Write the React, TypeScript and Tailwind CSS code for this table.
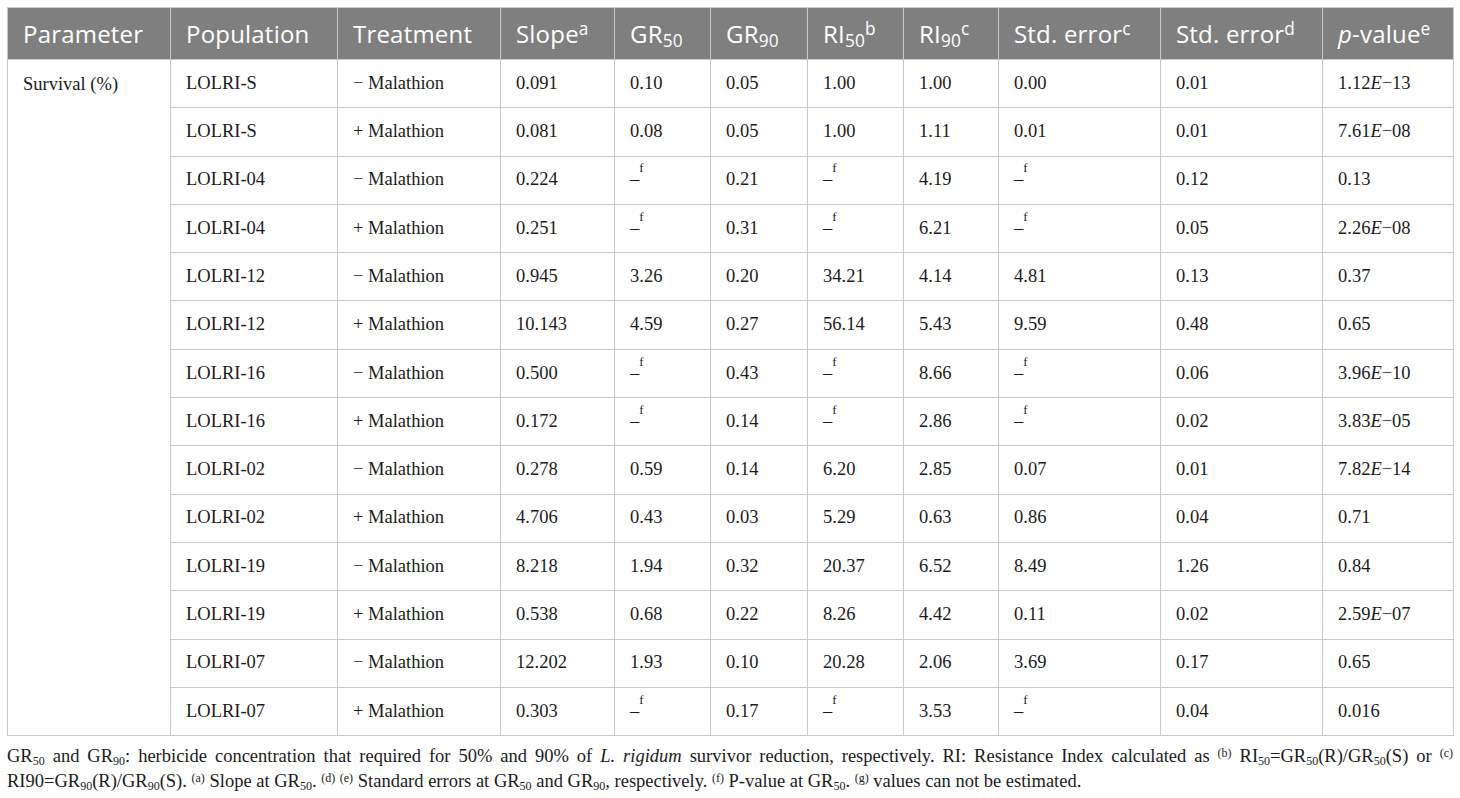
const widths = [163, 167, 163, 114, 96, 97, 96, 95, 162, 162, 131]

type Row = {
  pop: string
  treat: string
  slope: string
  gr50: string
  gr90: string
  ri50: string
  ri90: string
  sec: string
  sed: string
  p: [string, string] | string
}

const rows: Row[] = [
  { pop: "LOLRI-S", treat: "− Malathion", slope: "0.091", gr50: "0.10", gr90: "0.05", ri50: "1.00", ri90: "1.00", sec: "0.00", sed: "0.01", p: ["1.12", "−13"] },
  { pop: "LOLRI-S", treat: "+ Malathion", slope: "0.081", gr50: "0.08", gr90: "0.05", ri50: "1.00", ri90: "1.11", sec: "0.01", sed: "0.01", p: ["7.61", "−08"] },
  { pop: "LOLRI-04", treat: "− Malathion", slope: "0.224", gr50: "f", gr90: "0.21", ri50: "f", ri90: "4.19", sec: "f", sed: "0.12", p: "0.13" },
  { pop: "LOLRI-04", treat: "+ Malathion", slope: "0.251", gr50: "f", gr90: "0.31", ri50: "f", ri90: "6.21", sec: "f", sed: "0.05", p: ["2.26", "−08"] },
  { pop: "LOLRI-12", treat: "− Malathion", slope: "0.945", gr50: "3.26", gr90: "0.20", ri50: "34.21", ri90: "4.14", sec: "4.81", sed: "0.13", p: "0.37" },
  { pop: "LOLRI-12", treat: "+ Malathion", slope: "10.143", gr50: "4.59", gr90: "0.27", ri50: "56.14", ri90: "5.43", sec: "9.59", sed: "0.48", p: "0.65" },
  { pop: "LOLRI-16", treat: "− Malathion", slope: "0.500", gr50: "f", gr90: "0.43", ri50: "f", ri90: "8.66", sec: "f", sed: "0.06", p: ["3.96", "−10"] },
  { pop: "LOLRI-16", treat: "+ Malathion", slope: "0.172", gr50: "f", gr90: "0.14", ri50: "f", ri90: "2.86", sec: "f", sed: "0.02", p: ["3.83", "−05"] },
  { pop: "LOLRI-02", treat: "− Malathion", slope: "0.278", gr50: "0.59", gr90: "0.14", ri50: "6.20", ri90: "2.85", sec: "0.07", sed: "0.01", p: ["7.82", "−14"] },
  { pop: "LOLRI-02", treat: "+ Malathion", slope: "4.706", gr50: "0.43", gr90: "0.03", ri50: "5.29", ri90: "0.63", sec: "0.86", sed: "0.04", p: "0.71" },
  { pop: "LOLRI-19", treat: "− Malathion", slope: "8.218", gr50: "1.94", gr90: "0.32", ri50: "20.37", ri90: "6.52", sec: "8.49", sed: "1.26", p: "0.84" },
  { pop: "LOLRI-19", treat: "+ Malathion", slope: "0.538", gr50: "0.68", gr90: "0.22", ri50: "8.26", ri90: "4.42", sec: "0.11", sed: "0.02", p: ["2.59", "−07"] },
  { pop: "LOLRI-07", treat: "− Malathion", slope: "12.202", gr50: "1.93", gr90: "0.10", ri50: "20.28", ri90: "2.06", sec: "3.69", sed: "0.17", p: "0.65" },
  { pop: "LOLRI-07", treat: "+ Malathion", slope: "0.303", gr50: "f", gr90: "0.17", ri50: "f", ri90: "3.53", sec: "f", sed: "0.04", p: "0.016" },
]

function Val({ v }: { v: string }) {
  if (v === "f")
    return (
      <span>
        –<sup className="align-[0.5em] text-[13px] leading-none">f</sup>
      </span>
    )
  return <>{v}</>
}

function PVal({ p }: { p: Row["p"] }) {
  if (typeof p === "string") return <>{p}</>
  return (
    <>
      {p[0]}
      <i>E</i>
      {p[1]}
    </>
  )
}

const th = "border border-[#c9c9c9] px-[15px] text-left align-middle font-normal whitespace-nowrap"
const td = "h-[48.3px] border border-[#c9c9c9] px-[15px] align-middle whitespace-nowrap"
const sub = "align-[-0.25em] text-[0.72em] leading-none"
const sup = "align-[0.45em] text-[0.72em] leading-none"
const fsub = "align-[-0.25em] text-[12px] leading-none"
const fsup = "align-[0.45em] text-[12px] leading-none"

export default function App() {
  return (
    <div className="min-h-[798px] w-[1460px] bg-white px-[7px] pt-[7px] text-[#1b1b1b]">
      <table className="w-[1446px] table-fixed border-collapse">
        <colgroup>
          {widths.map((w, i) => (
            <col key={i} style={{ width: w }} />
          ))}
        </colgroup>
        <thead>
          <tr className="h-[52px] bg-[#7f7f7f] font-['Open_Sans',sans-serif] text-[24px] tracking-[0.2px] text-white">
            <th className={th}>Parameter</th>
            <th className={th}>Population</th>
            <th className={th}>Treatment</th>
            <th className={th}>
              Slope<span className={sup}>a</span>
            </th>
            <th className={th}>
              GR<span className={sub}>50</span>
            </th>
            <th className={th}>
              GR<span className={sub}>90</span>
            </th>
            <th className={th}>
              RI<span className={sub}>50</span>
              <span className={sup}>b</span>
            </th>
            <th className={th}>
              RI<span className={sub}>90</span>
              <span className={sup}>c</span>
            </th>
            <th className={th}>
              Std. error<span className={sup}>c</span>
            </th>
            <th className={th}>
              Std. error<span className={sup}>d</span>
            </th>
            <th className={th}>
              <i>p</i>-value<span className={sup}>e</span>
            </th>
          </tr>
        </thead>
        <tbody className="font-['Liberation_Serif',serif] text-[18.5px]">
          {rows.map((r, i) => (
            <tr key={i}>
              {i === 0 && (
                <td rowSpan={rows.length} className="border border-[#c9c9c9] px-[15px] pt-[11px] align-top">
                  Survival (%)
                </td>
              )}
              <td className={td}>{r.pop}</td>
              <td className={td}>{r.treat}</td>
              <td className={td}>{r.slope}</td>
              <td className={td}>
                <Val v={r.gr50} />
              </td>
              <td className={td}>
                <Val v={r.gr90} />
              </td>
              <td className={td}>
                <Val v={r.ri50} />
              </td>
              <td className={td}>
                <Val v={r.ri90} />
              </td>
              <td className={td}>
                <Val v={r.sec} />
              </td>
              <td className={td}>{r.sed}</td>
              <td className={td}>
                <PVal p={r.p} />
              </td>
            </tr>
          ))}
        </tbody>
      </table>
      <p className="mt-[8px] text-justify font-['Liberation_Serif',serif] text-[18.5px] leading-[25px] text-[#1b1b1b]">
        GR<span className={fsub}>50</span> and GR<span className={fsub}>90</span>: herbicide concentration that
        required for 50% and 90% of <i>L. rigidum</i> survivor reduction, respectively. RI: Resistance Index
        calculated as <span className={fsup}>(b)</span> RI<span className={fsub}>50</span>=GR
        <span className={fsub}>50</span>(R)/GR<span className={fsub}>50</span>(S) or{" "}
        <span className={fsup}>(c)</span> RI90=GR<span className={fsub}>90</span>(R)/GR
        <span className={fsub}>90</span>(S). <span className={fsup}>(a)</span> Slope at GR
        <span className={fsub}>50</span>. <span className={fsup}>(d)</span> <span className={fsup}>(e)</span>{" "}
        Standard errors at GR<span className={fsub}>50</span> and GR<span className={fsub}>90</span>, respectively.{" "}
        <span className={fsup}>(f)</span> P-value at GR<span className={fsub}>50</span>.{" "}
        <span className={fsup}>(g)</span> values can not be estimated.
      </p>
    </div>
  )
}
